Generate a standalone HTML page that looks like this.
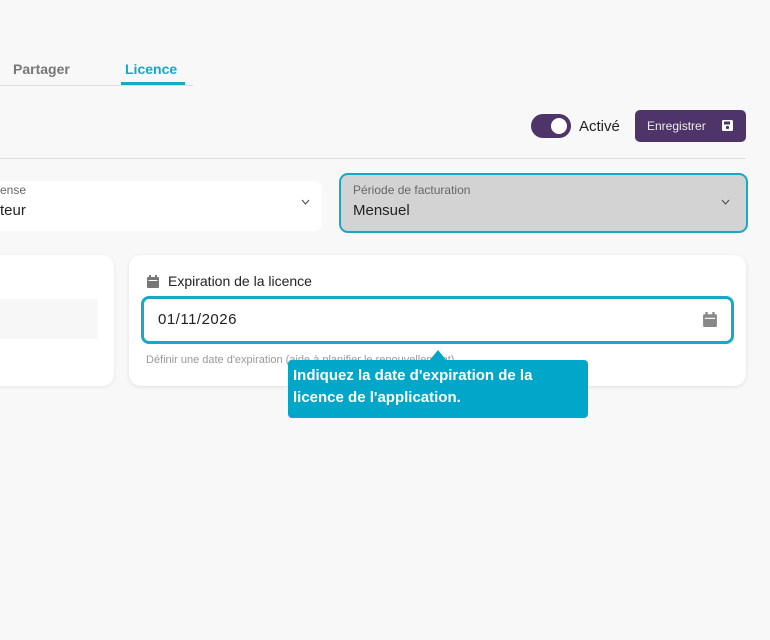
<!DOCTYPE html>
<html><head><style>
*{box-sizing:border-box;margin:0;padding:0}
body{width:770px;height:640px;background:#f8f8f8;font-family:"Liberation Sans",sans-serif;position:relative;overflow:hidden;color:#222}
.abs{position:absolute}
</style></head><body>
<div class="abs" style="left:0;top:85px;width:193px;height:1px;background:#ddd"></div>
<div class="abs" style="left:13px;top:61px;font-size:14px;font-weight:bold;color:#777">Partager</div>
<div class="abs" style="left:125px;top:61px;font-size:14px;font-weight:bold;color:#17a8c6">Licence</div>
<div class="abs" style="left:121px;top:82px;width:64px;height:3px;background:#17a8c6"></div>

<div class="abs" style="left:531px;top:114px;width:40px;height:24px;border-radius:12px;background:#4e3468"></div>
<div class="abs" style="left:551px;top:118px;width:16px;height:16px;border-radius:8px;background:#fff"></div>
<div class="abs" style="left:579px;top:118px;font-size:15px;color:#222">Activé</div>
<div class="abs" style="left:635px;top:110px;width:111px;height:32px;border-radius:5px;background:#4e3468;color:#eee;font-size:12px;padding:9px 0 0 12px">Enregistrer
<svg style="position:absolute;left:87px;top:10px" width="11" height="11" viewBox="0 0 11 11"><rect x="0" y="0" width="11" height="11" rx="1.5" fill="#fff"/><rect x="2" y="1.5" width="6" height="3" fill="#4e3468"/><circle cx="5.5" cy="7.5" r="1.6" fill="#4e3468"/></svg></div>

<div class="abs" style="left:0;top:158px;width:746px;height:1px;background:#ddd"></div>

<div class="abs" style="left:0;top:181px;width:322px;height:50px;background:#fff;border-radius:0 8px 8px 0"></div>
<div class="abs" style="left:0;top:183px;font-size:12px;color:#666">ense</div>
<div class="abs" style="left:0;top:202px;font-size:15px;color:#222">teur</div>
<svg class="abs" style="left:301px;top:199px" width="9" height="6" viewBox="0 0 9 6"><path d="M1 1L4.5 5L8 1" stroke="#444" fill="none" stroke-width="1"/></svg>

<div class="abs" style="left:339px;top:173px;width:409px;height:60px;background:#d3d3d3;border:2px solid #17a8c6;border-radius:9px"></div>
<div class="abs" style="left:353px;top:183px;font-size:12px;color:#666">Période de facturation</div>
<div class="abs" style="left:353px;top:202px;font-size:15px;color:#222">Mensuel</div>
<svg class="abs" style="left:721px;top:199px" width="9" height="6" viewBox="0 0 9 6"><path d="M1 1L4.5 5L8 1" stroke="#444" fill="none" stroke-width="1"/></svg>

<div class="abs" style="left:-10px;top:255px;width:124px;height:131px;background:#fff;border-radius:12px;box-shadow:0 1px 4px rgba(0,0,0,.08)"></div>
<div class="abs" style="left:0;top:299px;width:98px;height:40px;background:#f7f7f7"></div>

<div class="abs" style="left:129px;top:255px;width:617px;height:131px;background:#fff;border-radius:12px;box-shadow:0 1px 4px rgba(0,0,0,.1)"></div>
<svg class="abs" style="left:147px;top:275px" width="12" height="13" viewBox="0 0 12 13"><rect x="0" y="2" width="12" height="11" rx="1" fill="#777"/><rect x="2" y="0" width="2" height="3" fill="#777"/><rect x="8" y="0" width="2" height="3" fill="#777"/><rect x="1.5" y="5" width="9" height="1" fill="#fff"/></svg>
<div class="abs" style="left:168px;top:273px;font-size:14px;color:#222">Expiration de la licence</div>
<div class="abs" style="left:141px;top:296px;width:593px;height:48px;border:3px solid #17a8c6;border-radius:8px"></div>
<div class="abs" style="left:158px;top:311px;font-size:15px;color:#222;letter-spacing:.5px">01/11/2026</div>
<svg class="abs" style="left:703px;top:312px" width="14" height="15" viewBox="0 0 12 13"><rect x="0" y="2" width="12" height="11" rx="1" fill="#888"/><rect x="2" y="0" width="2" height="3" fill="#888"/><rect x="8" y="0" width="2" height="3" fill="#888"/><rect x="1.5" y="5" width="9" height="1" fill="#fff"/></svg>
<div class="abs" style="left:146px;top:354px;font-size:11px;color:#999">Définir une date d'expiration (aide à planifier le renouvellement)</div>

<div class="abs" style="left:429px;top:350px;width:0;height:0;border-left:9px solid transparent;border-right:9px solid transparent;border-bottom:11px solid #00a7c9"></div>
<div class="abs" style="left:288px;top:360px;width:300px;height:58px;background:#00a7c9;border-radius:4px;color:#fff;font-weight:bold;font-size:15px;line-height:22px;padding:5px 0 0 5px">Indiquez la date d'expiration de la<br>licence de l'application.</div>
</body></html>
